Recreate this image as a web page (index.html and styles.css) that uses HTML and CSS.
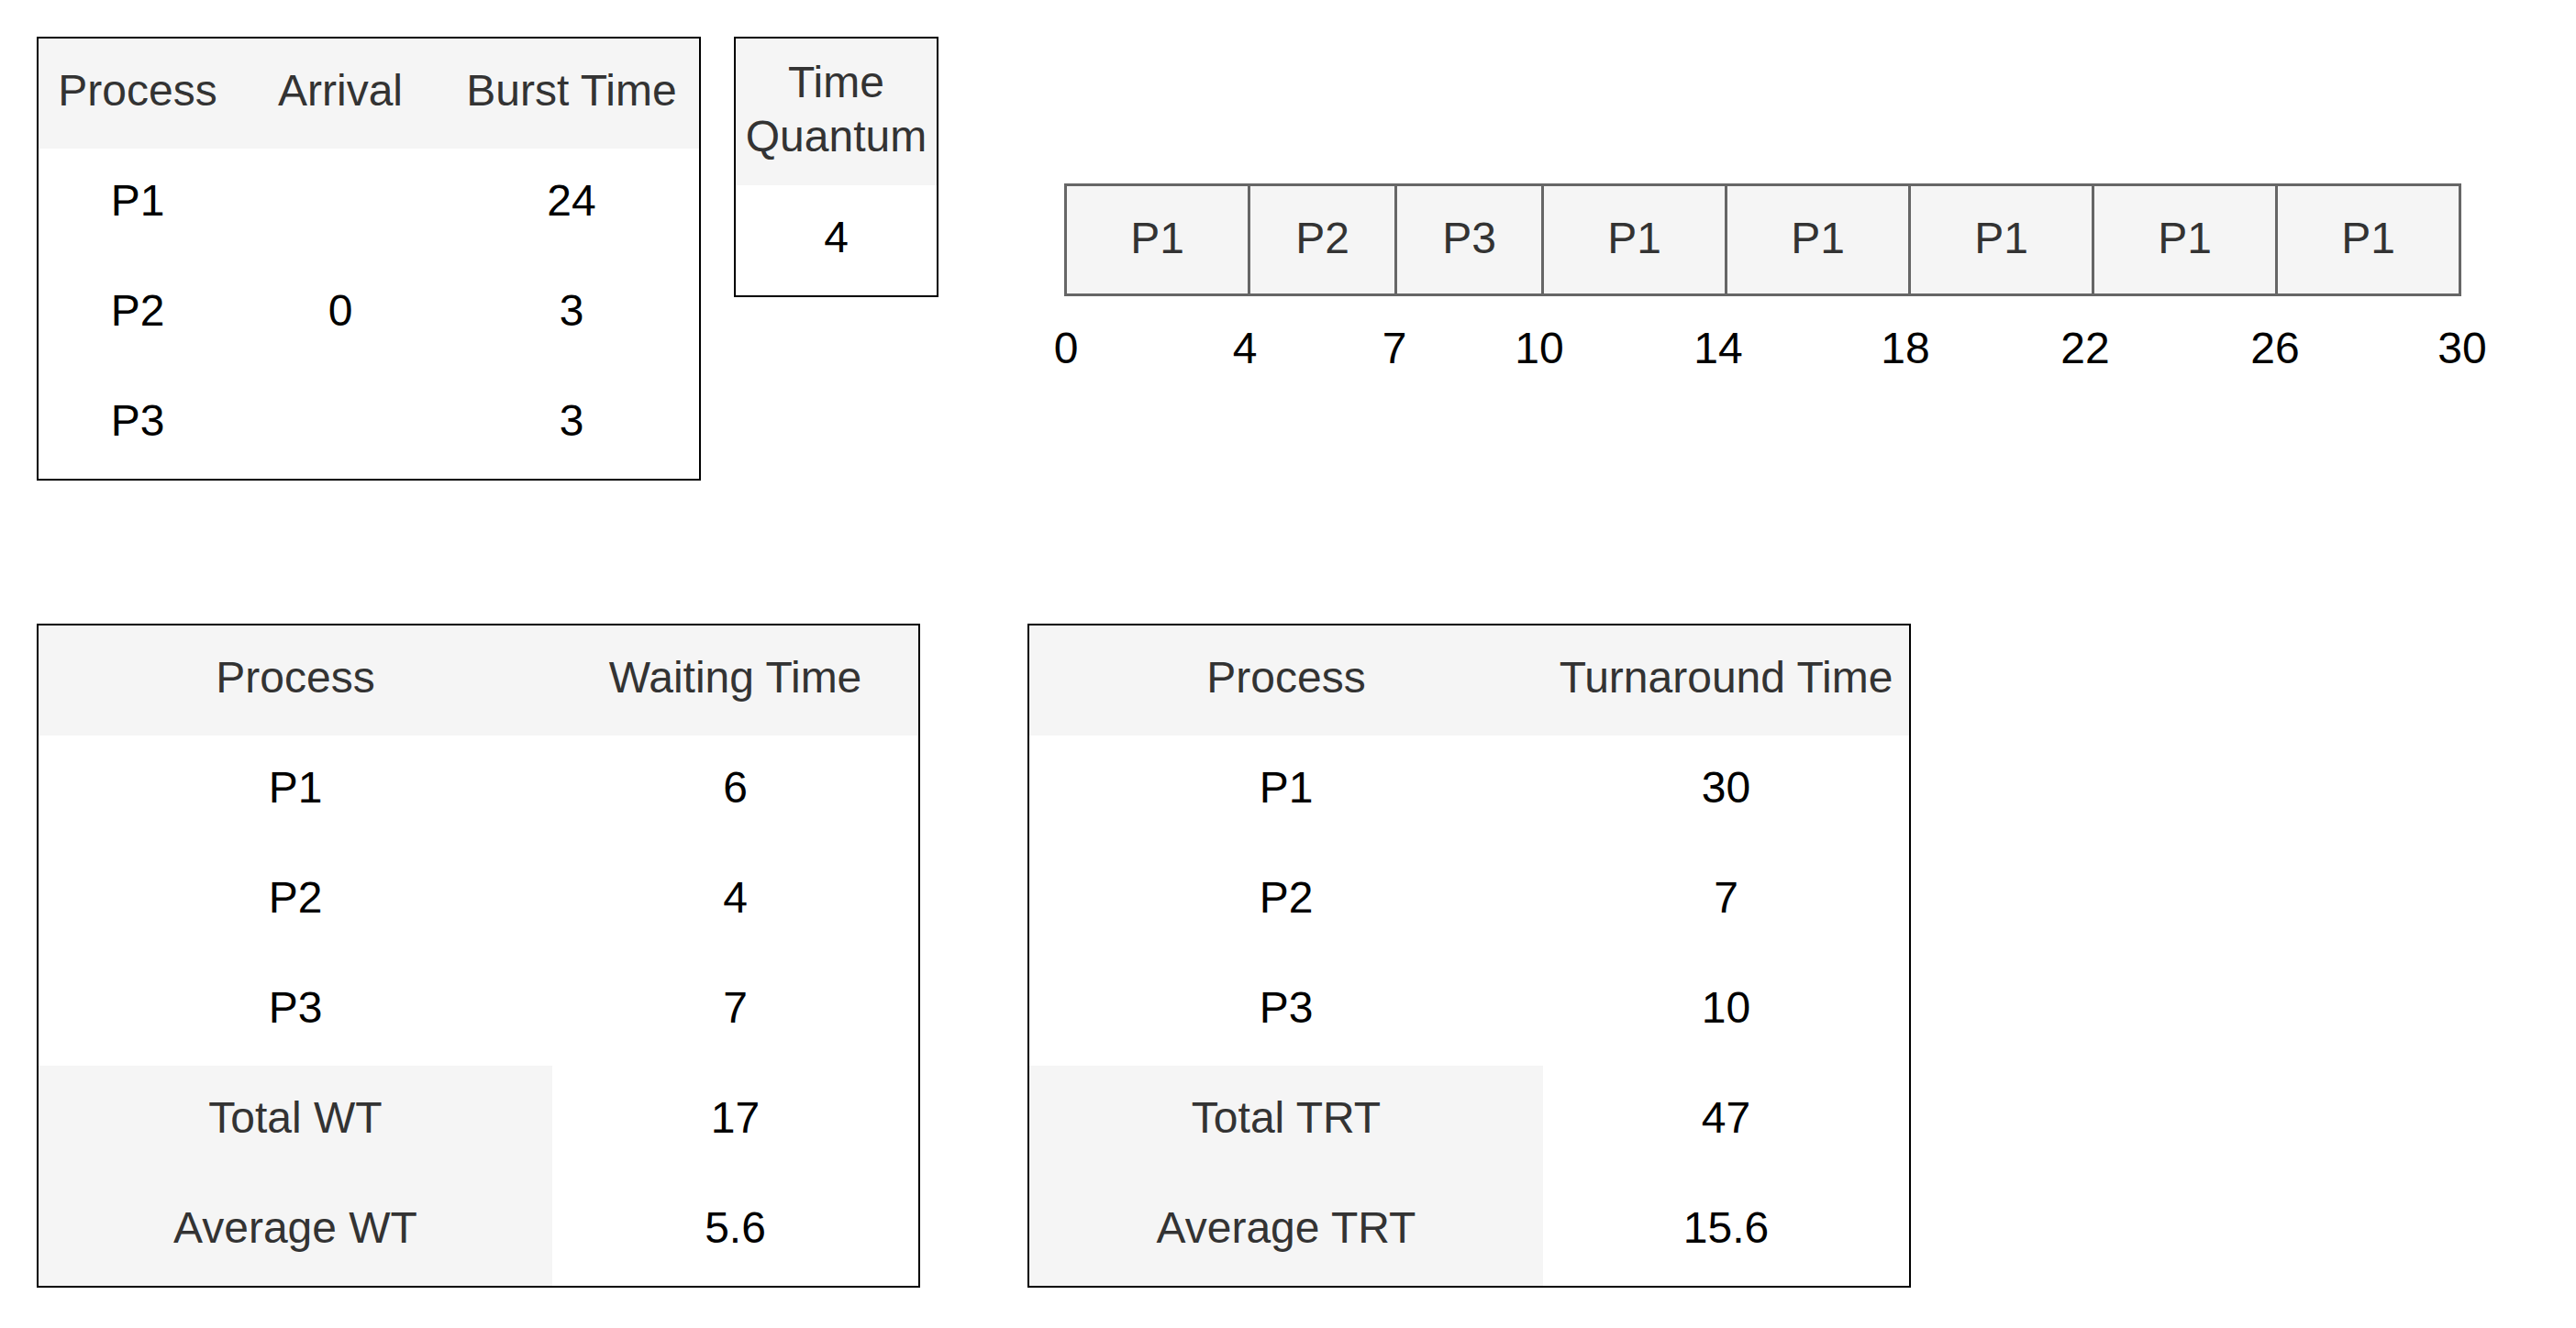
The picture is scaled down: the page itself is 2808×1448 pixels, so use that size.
FILE: index.html
```html
<!DOCTYPE html>
<html lang="en">
<head>
<meta charset="utf-8">
<title>Round Robin Scheduling</title>
<link rel="stylesheet" href="styles.css">
</head>
<body>
<div class="page">
  <div class="top">
    <div class="box t-input">
      <div class="c h">Process</div>
      <div class="c h">Arrival</div>
      <div class="c h">Burst Time</div>
      <div class="c">P1</div>
      <div class="c arr">0</div>
      <div class="c">24</div>
      <div class="c">P2</div>
      <div class="c">3</div>
      <div class="c">P3</div>
      <div class="c">3</div>
    </div>

    <div class="box t-quantum">
      <div class="c h two">Time<br>Quantum</div>
      <div class="c">4</div>
    </div>

    <div class="gantt-wrap">
      <div class="gantt">
        <div class="seg w4">P1</div>
        <div class="seg w3">P2</div>
        <div class="seg w3">P3</div>
        <div class="seg w4">P1</div>
        <div class="seg w4">P1</div>
        <div class="seg w4">P1</div>
        <div class="seg w4">P1</div>
        <div class="seg w4">P1</div>
      </div>
      <div class="axis">
        <div class="tick"><span>0</span></div>
        <div class="tick"><span>4</span></div>
        <div class="tick"><span>7</span></div>
        <div class="tick"><span>10</span></div>
        <div class="tick"><span>14</span></div>
        <div class="tick"><span>18</span></div>
        <div class="tick"><span>22</span></div>
        <div class="tick"><span>26</span></div>
        <div class="tick"><span>30</span></div>
      </div>
    </div>
  </div>

  <div class="bottom">
    <div class="box t-result">
      <div class="c h">Process</div>
      <div class="c h">Waiting Time</div>
      <div class="c">P1</div>
      <div class="c">6</div>
      <div class="c">P2</div>
      <div class="c">4</div>
      <div class="c">P3</div>
      <div class="c">7</div>
      <div class="c h">Total WT</div>
      <div class="c">17</div>
      <div class="c h">Average WT</div>
      <div class="c">5.6</div>
    </div>

    <div class="box t-result">
      <div class="c h">Process</div>
      <div class="c h">Turnaround Time</div>
      <div class="c">P1</div>
      <div class="c">30</div>
      <div class="c">P2</div>
      <div class="c">7</div>
      <div class="c">P3</div>
      <div class="c">10</div>
      <div class="c h">Total TRT</div>
      <div class="c">47</div>
      <div class="c h">Average TRT</div>
      <div class="c">15.6</div>
    </div>
  </div>
</div>
</body>
</html>
```

FILE: styles.css
```css
html, body {
  margin: 0;
  padding: 0;
  background: #ffffff;
}

body {
  font-family: "Liberation Sans", Arial, Helvetica, sans-serif;
  font-size: 48px;
  color: #000000;
}

.page {
  padding: 40px;
}

.top {
  display: flex;
  align-items: flex-start;
}

.box {
  display: grid;
  border: 2px solid #000000;
  background: #ffffff;
}

.c {
  display: flex;
  align-items: center;
  justify-content: center;
  text-align: center;
  padding-bottom: 6px;
  box-sizing: border-box;
  white-space: nowrap;
  line-height: 1.15;
}

.c.h {
  background: #f5f5f5;
  color: #333333;
}

.t-input {
  grid-template-columns: 216px 226px 278px;
  grid-auto-rows: 120px;
  margin-right: 36px;
}

.t-input .arr {
  grid-row: span 3;
}

.t-quantum {
  grid-template-columns: 219px;
  grid-template-rows: 160px 120px;
  margin-right: 137px;
}

.c.two {
  line-height: 59px;
}

.gantt-wrap {
  margin-top: 160px;
}

.gantt {
  display: flex;
}

.seg {
  box-sizing: border-box;
  height: 123px;
  border: 3px solid #666666;
  background: #f5f5f5;
  color: #333333;
  display: flex;
  align-items: center;
  justify-content: center;
  padding-bottom: 5px;
}

.seg + .seg {
  margin-left: -3px;
}

.seg.w4 {
  width: 203px;
}

.seg.w3 {
  width: 163px;
}

.axis {
  display: flex;
  margin-top: 28px;
  margin-left: 2px;
  line-height: 58px;
}

.tick {
  width: 200px;
  flex: none;
}

.tick:nth-child(1) { width: 195px; }
.tick:nth-child(2) { width: 163px; }
.tick:nth-child(3) { width: 158px; }
.tick:nth-child(4) { width: 195px; }
.tick:nth-child(5) { width: 204px; }
.tick:nth-child(6) { width: 196px; }
.tick:nth-child(7) { width: 207px; }
.tick:nth-child(8) { width: 204px; }
.tick:nth-child(9) { width: 0; }

.tick span {
  display: inline-block;
  transform: translateX(-50%);
  white-space: nowrap;
}

.bottom {
  display: flex;
  gap: 117px;
  margin-top: 156px;
}

.t-result {
  grid-template-columns: 560px 399px;
  grid-auto-rows: 120px;
}
```
